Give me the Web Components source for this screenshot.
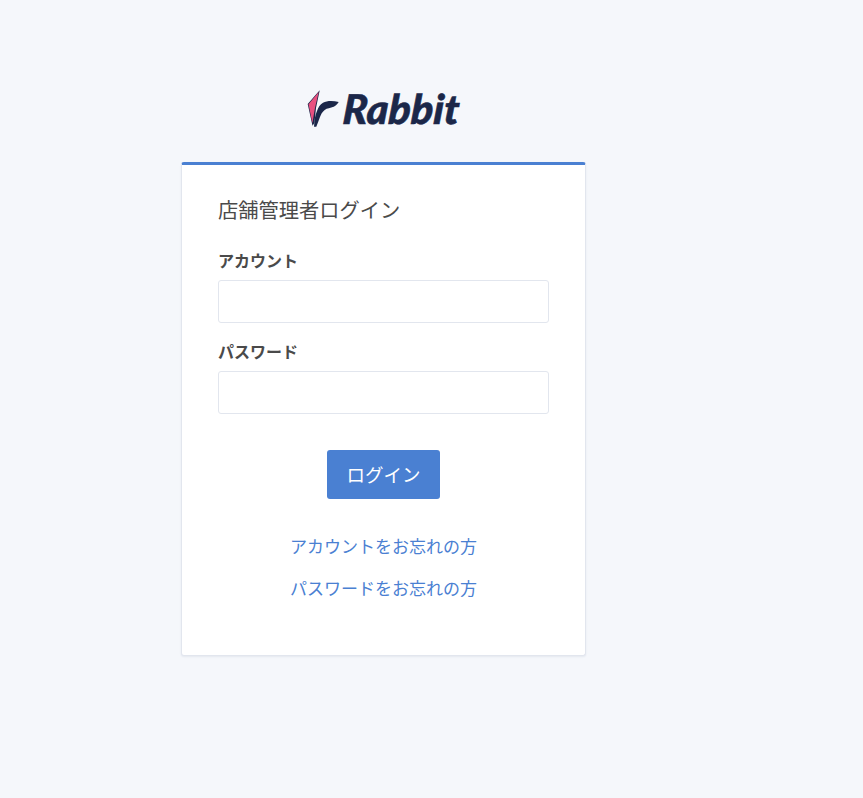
<!DOCTYPE html>
<html lang="ja">
<head>
<meta charset="utf-8">
<title>店舗管理者ログイン</title>
<style>
  html, body { margin: 0; height: 100%; background: #f5f7fb; }
  body { font-family: "Noto Sans CJK JP", "Liberation Sans", sans-serif; color: #4a4a4a; }
</style>
</head>
<body>
<login-page>
  <brand-logo slot="logo"></brand-logo>
  <login-card heading="店舗管理者ログイン">
    <form-field label="アカウント"></form-field>
    <form-field label="パスワード" type="password"></form-field>
    <login-button slot="action">ログイン</login-button>
    <help-link slot="links">アカウントをお忘れの方</help-link>
    <help-link slot="links">パスワードをお忘れの方</help-link>
  </login-card>
</login-page>

<script>
class LoginPage extends HTMLElement {
  constructor() {
    super();
    this.attachShadow({ mode: 'open' }).innerHTML = `
      <style>
        :host { display: block; box-sizing: border-box; width: 405px; margin-left: 181px; padding-top: 90px; }
        .logo { display: flex; justify-content: center; height: 72px; box-sizing: border-box; }
      </style>
      <div class="logo"><slot name="logo"></slot></div>
      <slot></slot>
    `;
  }
}

class BrandLogo extends HTMLElement {
  constructor() {
    super();
    this.attachShadow({ mode: 'open' }).innerHTML = `
      <style>
        :host { display: flex; align-items: flex-start; gap: 4px; height: 40px; }
        svg { display: block; }
        span {
          display: inline-block;
          font: italic 900 41px/37px Lato, "Liberation Sans", sans-serif;
          color: #1b2749;
          -webkit-text-stroke: 0.6px #1b2749;
          letter-spacing: 0.2px;
          transform: skewX(-4deg);
        }
      </style>
      <svg width="32" height="37" viewBox="0 0 32 37">
        <path d="M12.7 0.3 L0.7 14 L5.5 35.8 L7.4 33 L9 18 Z" fill="#1b2749"/>
        <path d="M11.7 2 L1.5 14.3 L5.4 33 L8 17.7 Z" fill="#e8507f"/>
        <path d="M7 36.7 C7.6 30 8 25 10 21 C11.5 17 13 14.4 16 12.7 C20 10.6 26 10.6 31.7 12 C30 14.5 28.5 15.8 26.7 16.7 C23.5 18 20 18 17.7 20 C15 22 13.7 25 12.7 27.7 C11.5 31 10.4 34 9.3 36.7 Z" fill="#1b2749"/>
      </svg>
      <span>Rabbit</span>
    `;
  }
}

class LoginCard extends HTMLElement {
  constructor() {
    super();
    this.attachShadow({ mode: 'open' }).innerHTML = `
      <style>
        :host {
          display: block;
          box-sizing: border-box;
          height: 494px;
          padding: 32px 36px 0 36px;
          background: #fff;
          border: 1px solid #e2e6ee;
          border-top: 3px solid #4a80d2;
          border-radius: 3px;
          box-shadow: 0 1px 2px rgba(40, 60, 100, .08);
        }
        h1 { margin: 0 0 26px; font-size: 20.25px; line-height: 26px; font-weight: 400; color: #4a4a4a; }
        .action { display: flex; justify-content: center; margin-top: 36px; }
        .links { display: flex; flex-direction: column; align-items: center; gap: 17px; margin-top: 34px; }
      </style>
      <h1></h1>
      <slot></slot>
      <div class="action"><slot name="action"></slot></div>
      <div class="links"><slot name="links"></slot></div>
    `;
    this.shadowRoot.querySelector('h1').textContent = this.getAttribute('heading');
  }
}

class FormField extends HTMLElement {
  constructor() {
    super();
    const type = this.getAttribute('type') || 'text';
    this.attachShadow({ mode: 'open' }).innerHTML = `
      <style>
        :host { display: block; margin-bottom: 17px; }
        :host(:last-of-type) { margin-bottom: 0; }
        label { display: block; font-size: 16px; line-height: 22px; font-weight: 700; color: #4a4a4a; margin-bottom: 9px; }
        input {
          display: block;
          box-sizing: border-box;
          width: 331px;
          height: 43px;
          padding: 0 12px;
          background: #fff;
          border: 1px solid #e2e6ee;
          border-radius: 3px;
          outline: none;
        }
      </style>
      <label></label>
      <input type="${type}">
    `;
    this.shadowRoot.querySelector('label').textContent = this.getAttribute('label');
  }
}

class LoginButton extends HTMLElement {
  constructor() {
    super();
    this.attachShadow({ mode: 'open' }).innerHTML = `
      <style>
        :host { display: block; }
        button {
          display: block;
          box-sizing: border-box;
          width: 113px;
          height: 49px;
          padding: 0;
          background: #4a80d2;
          color: #fff;
          border: 0;
          border-radius: 3px;
          font: 400 18.5px/49px "Noto Sans CJK JP", sans-serif;
          cursor: pointer;
        }
      </style>
      <button type="button"><slot></slot></button>
    `;
  }
}

class HelpLink extends HTMLElement {
  constructor() {
    super();
    this.attachShadow({ mode: 'open' }).innerHTML = `
      <style>
        :host { display: block; font-size: 17px; line-height: 25px; font-weight: 400; }
        a { color: #4a80d2; text-decoration: none; }
      </style>
      <a href="#"><slot></slot></a>
    `;
  }
}

customElements.define('login-page', LoginPage);
customElements.define('brand-logo', BrandLogo);
customElements.define('login-card', LoginCard);
customElements.define('form-field', FormField);
customElements.define('login-button', LoginButton);
customElements.define('help-link', HelpLink);
</script>
</body>
</html>
